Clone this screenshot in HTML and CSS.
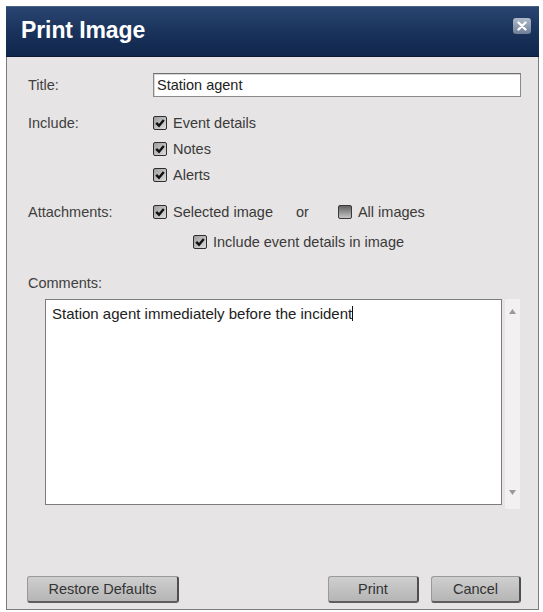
FILE: index.html
```html
<!DOCTYPE html>
<html>
<head>
<meta charset="utf-8">
<link rel="stylesheet" href="styles.css">
</head>
<body>
<svg class="defs" width="0" height="0">
  <defs>
    <linearGradient id="cbOn" x1="0" y1="0" x2="1" y2="1">
      <stop offset="0" stop-color="#9a9a9a"/>
      <stop offset="1" stop-color="#e0e0e0"/>
    </linearGradient>
    <linearGradient id="cbOff" x1="0" y1="0" x2="0" y2="1">
      <stop offset="0" stop-color="#5d5d5d"/>
      <stop offset="1" stop-color="#c9c9c9"/>
    </linearGradient>
  </defs>
</svg>
<div class="dialog">
  <div class="titlebar">
    <span class="title">Print Image</span>
    <span class="close"><svg width="10" height="10" viewBox="0 0 10 10"><path d="M1.5 1.5l7 7M8.5 1.5l-7 7" stroke="#fff" stroke-width="2.4" stroke-linecap="round"/></svg></span>
  </div>
  <div class="content">
    <div class="row title-row">
      <span class="label">Title:</span>
      <div class="input">Station agent</div>
    </div>
    <div class="row include-row">
      <span class="label">Include:</span>
      <div class="checks">
        <div class="check"><svg class="cb" width="14" height="14" viewBox="0 0 14 14"><rect x=".5" y=".5" width="13" height="13" rx="1.5" fill="url(#cbOn)" stroke="#2e2e2e"/><path d="M3.2 6.8l2.8 2.9 4.8-5.8" stroke="#111" stroke-width="2.4" fill="none"/></svg><span>Event details</span></div>
        <div class="check"><svg class="cb" width="14" height="14" viewBox="0 0 14 14"><rect x=".5" y=".5" width="13" height="13" rx="1.5" fill="url(#cbOn)" stroke="#2e2e2e"/><path d="M3.2 6.8l2.8 2.9 4.8-5.8" stroke="#111" stroke-width="2.4" fill="none"/></svg><span>Notes</span></div>
        <div class="check"><svg class="cb" width="14" height="14" viewBox="0 0 14 14"><rect x=".5" y=".5" width="13" height="13" rx="1.5" fill="url(#cbOn)" stroke="#2e2e2e"/><path d="M3.2 6.8l2.8 2.9 4.8-5.8" stroke="#111" stroke-width="2.4" fill="none"/></svg><span>Alerts</span></div>
      </div>
    </div>
    <div class="row attach-row">
      <span class="label">Attachments:</span>
      <div class="check"><svg class="cb" width="14" height="14" viewBox="0 0 14 14"><rect x=".5" y=".5" width="13" height="13" rx="1.5" fill="url(#cbOn)" stroke="#2e2e2e"/><path d="M3.2 6.8l2.8 2.9 4.8-5.8" stroke="#111" stroke-width="2.4" fill="none"/></svg><span>Selected image</span></div>
      <span class="or">or</span>
      <div class="check"><svg class="cb" width="14" height="14" viewBox="0 0 14 14"><rect x=".5" y=".5" width="13" height="13" rx="1.5" fill="url(#cbOff)" stroke="#3a3a3a"/></svg><span>All images</span></div>
    </div>
    <div class="row sub-row">
      <div class="check"><svg class="cb" width="14" height="14" viewBox="0 0 14 14"><rect x=".5" y=".5" width="13" height="13" rx="1.5" fill="url(#cbOn)" stroke="#2e2e2e"/><path d="M3.2 6.8l2.8 2.9 4.8-5.8" stroke="#111" stroke-width="2.4" fill="none"/></svg><span>Include event details in image</span></div>
    </div>
    <div class="row comments-label">
      <span class="label">Comments:</span>
    </div>
    <div class="comments-area">
      <div class="textarea">Station agent immediately before the incident<span class="caret"></span></div>
      <div class="scrollbar">
        <svg width="7" height="5" viewBox="0 0 7 5"><path d="M0 5L3.5 0 7 5z" fill="#9a9a9a"/></svg>
        <svg width="7" height="5" viewBox="0 0 7 5"><path d="M0 0L3.5 5 7 0z" fill="#9a9a9a"/></svg>
      </div>
    </div>
    <div class="footer">
      <button class="btn btn-restore">Restore Defaults</button>
      <div class="spacer"></div>
      <button class="btn btn-print">Print</button>
      <button class="btn btn-cancel">Cancel</button>
    </div>
  </div>
</div>
</body>
</html>
```
FILE: styles.css
```css
html, body {
  margin: 0;
  padding: 0;
  background: #ffffff;
}
body {
  padding: 6px 0 0 6px;
  font-family: "Liberation Sans", Arial, sans-serif;
  font-size: 14.5px;
  color: #3a3a3a;
}
.defs {
  position: absolute;
  width: 0;
  height: 0;
}
.dialog {
  width: 533px;
  height: 604px;
  box-sizing: border-box;
  display: flex;
  flex-direction: column;
  background: #e6e4e4;
  border: 1px solid #7c7c7c;
  border-top: none;
}
.titlebar {
  height: 51px;
  margin: 0 -1px;
  flex: none;
  display: flex;
  align-items: center;
  justify-content: space-between;
  padding: 0 8px 0 15px;
  background: linear-gradient(#2a4572 0%, #1a335c 50%, #10274c 100%);
  border-top: 1px solid #4a6288;
  border-bottom: 1px solid #0a1a36;
  box-sizing: border-box;
}
.title {
  color: #fff;
  font-weight: bold;
  font-size: 23px;
  letter-spacing: -0.1px;
  margin-top: -2px;
}
.close {
  width: 18px;
  height: 16px;
  border-radius: 3px;
  background: linear-gradient(#b0bccb, #6d7e96);
  display: flex;
  align-items: center;
  justify-content: center;
  margin-top: -12px;
}
.content {
  flex: 1;
  display: flex;
  flex-direction: column;
  padding: 16px 17px 6px 21px;
}
.row {
  display: flex;
  align-items: center;
}
.label {
  width: 125px;
  flex: none;
  color: #404040;
}
.title-row {
  height: 24px;
}
.input {
  flex: 1;
  height: 24px;
  box-sizing: border-box;
  background: #fff;
  border: 1px solid #8a8a8a;
  border-top-color: #6e6e6e;
  box-shadow: inset 1px 1px 0 #d8d8d8;
  padding: 0 3px;
  line-height: 22px;
  color: #222;
}
.include-row {
  margin-top: 13px;
  align-items: flex-start;
}
.include-row .label {
  line-height: 26px;
}
.checks {
  display: flex;
  flex-direction: column;
}
.check {
  height: 26px;
  display: flex;
  align-items: center;
  gap: 6px;
  color: #3a3a3a;
}
.cb {
  flex: none;
}
.attach-row {
  margin-top: 11px;
}
.or {
  margin: 0 0 0 23px;
  width: 42px;
}
.sub-row {
  margin-top: 4px;
  padding-left: 165px;
}
.comments-label {
  margin-top: 16px;
  height: 24px;
}
.comments-area {
  margin-top: 4px;
  display: flex;
  padding-left: 17px;
}
.textarea {
  width: 457px;
  height: 206px;
  box-sizing: border-box;
  background: #fff;
  border: 1px solid #7d7d7d;
  padding: 4px 6px;
  line-height: 20px;
  font-size: 15px;
  color: #222;
}
.caret {
  display: inline-block;
  width: 1px;
  height: 15px;
  background: #111;
  vertical-align: -2px;
}
.scrollbar {
  width: 15px;
  margin-left: 3px;
  height: 210px;
  background: #f2f0f0;
  display: flex;
  flex-direction: column;
  justify-content: space-between;
  align-items: center;
  padding: 10px 0 14px;
  box-sizing: border-box;
}
.footer {
  margin-top: auto;
  display: flex;
  align-items: center;
  gap: 12px;
}
.spacer {
  flex: 1;
}
.btn {
  height: 27px;
  font-family: "Liberation Sans", Arial, sans-serif;
  font-size: 14.5px;
  color: #333;
  background: linear-gradient(#cfcfcf, #b5b5b5);
  border: 1px solid #9a9a9a;
  border-right: 2px solid #4e4e4e;
  border-bottom: 2px solid #5e5e5e;
  border-radius: 3px;
  padding: 0;
}
.btn-restore {
  width: 152px;
  margin-left: -1px;
}
.btn-print {
  width: 91px;
}
.btn-cancel {
  width: 90px;
}
```
